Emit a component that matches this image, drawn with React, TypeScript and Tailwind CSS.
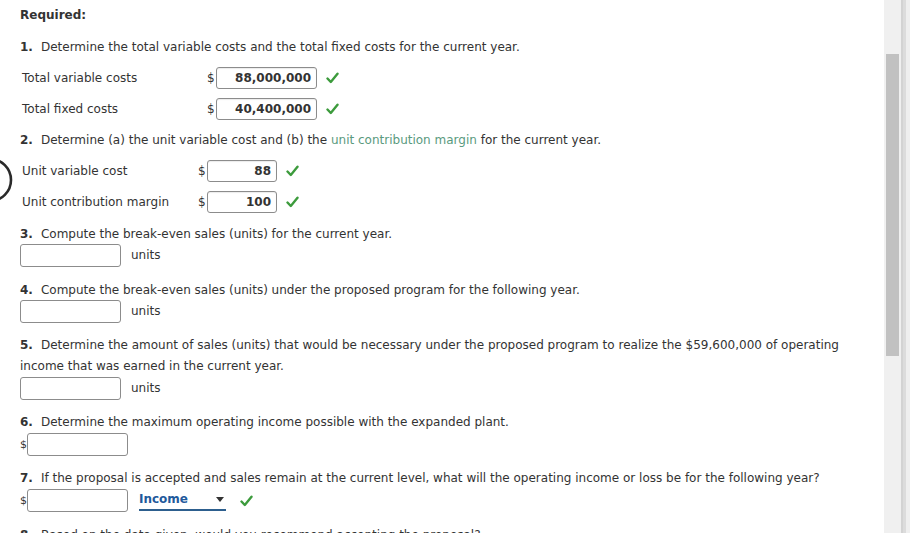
import React from "react";

const Check = () => (
  <svg width="13" height="12" viewBox="0 0 13 12" className="inline-block">
    <path d="M1.5 6.5 L4.8 10 L11.5 1.8" fill="none" stroke="#3c9b3c" strokeWidth="2.4" strokeLinecap="round" strokeLinejoin="round" />
  </svg>
);

const Num = ({ n }: { n: string }) => (
  <>
    <b className="font-bold">{n}</b>
    <span className="inline-block w-[8px]" />
  </>
);

const Box = ({ w, value }: { w: string; value?: string }) => (
  <div
    className={`${w} h-[22px] border border-[#8c8c8c] rounded-[3px] bg-white flex items-center justify-end pr-[5px] font-bold text-[12px] text-[#333] shadow-[inset_0_1px_1px_rgba(0,0,0,0.08)]`}
  >
    {value}
  </div>
);

export default function App() {
  return (
    <div
      className="w-[910px] h-[533px] overflow-hidden flex bg-white text-[#333] text-[12px] leading-[21px]"
      style={{ fontFamily: '"DejaVu Sans", Verdana, sans-serif' }}
    >
      <div className="relative flex-1 pl-[20px]">
        <svg className="absolute left-0 top-[156px]" width="16" height="48" viewBox="0 0 16 48">
          <circle cx="-10" cy="24" r="21" fill="none" stroke="#2a2a2a" strokeWidth="2.6" />
        </svg>

        <div className="mt-[5px] h-[20px] flex items-center font-bold text-[#333]">Required:</div>

        <div className="mt-[12px] h-[20px] flex items-center">
          <span>
            <Num n="1." />
            Determine the total variable costs and the total fixed costs for the current year.
          </span>
        </div>

        <div className="mt-[10px] h-[22px] flex items-center pl-[2px]">
          <div className="w-[185px]">Total variable costs</div>
          <span className="w-[9px]">$</span>
          <Box w="w-[101px]" value="88,000,000" />
          <span className="ml-[9px] flex items-center"><Check /></span>
        </div>
        <div className="mt-[9px] h-[22px] flex items-center pl-[2px]">
          <div className="w-[185px]">Total fixed costs</div>
          <span className="w-[9px]">$</span>
          <Box w="w-[101px]" value="40,400,000" />
          <span className="ml-[9px] flex items-center"><Check /></span>
        </div>

        <div className="mt-[10px] h-[20px] flex items-center">
          <span>
            <Num n="2." />
            Determine (a) the unit variable cost and (b) the{" "}
            <span className="text-[#5a9a7e]">unit contribution margin</span> for the current year.
          </span>
        </div>

        <div className="mt-[10px] h-[22px] flex items-center pl-[2px]">
          <div className="w-[176px]">Unit variable cost</div>
          <span className="w-[9px]">$</span>
          <Box w="w-[70px]" value="88" />
          <span className="ml-[9px] flex items-center"><Check /></span>
        </div>
        <div className="mt-[9px] h-[22px] flex items-center pl-[2px]">
          <div className="w-[176px]">Unit contribution margin</div>
          <span className="w-[9px]">$</span>
          <Box w="w-[70px]" value="100" />
          <span className="ml-[9px] flex items-center"><Check /></span>
        </div>

        <div className="mt-[11px] h-[20px] flex items-center">
          <span>
            <Num n="3." />
            Compute the break-even sales (units) for the current year.
          </span>
        </div>
        <div className="h-[23px] flex items-center">
          <div className="w-[101px] h-[23px] border border-[#8c8c8c] rounded-[3px] bg-white" />
          <span className="ml-[10px]">units</span>
        </div>

        <div className="mt-[13px] h-[20px] flex items-center">
          <span>
            <Num n="4." />
            Compute the break-even sales (units) under the proposed program for the following year.
          </span>
        </div>
        <div className="h-[23px] flex items-center">
          <div className="w-[101px] h-[23px] border border-[#8c8c8c] rounded-[3px] bg-white" />
          <span className="ml-[10px]">units</span>
        </div>

        <div className="mt-[12px] w-[850px]">
          <Num n="5." />
          Determine the amount of sales (units) that would be necessary under the proposed program to realize the $59,600,000 of operating income that was earned in the current year.
        </div>
        <div className="h-[23px] flex items-center">
          <div className="w-[101px] h-[23px] border border-[#8c8c8c] rounded-[3px] bg-white" />
          <span className="ml-[10px]">units</span>
        </div>

        <div className="mt-[12px] h-[20px] flex items-center">
          <span>
            <Num n="6." />
            Determine the maximum operating income possible with the expanded plant.
          </span>
        </div>
        <div className="mt-[1px] h-[23px] flex items-center">
          <span className="w-[7px] text-[11px]">$</span>
          <div className="w-[101px] h-[23px] border border-[#8c8c8c] rounded-[3px] bg-white" />
        </div>

        <div className="mt-[12px] h-[20px] flex items-center">
          <span>
            <Num n="7." />
            If the proposal is accepted and sales remain at the current level, what will the operating income or loss be for the following year?
          </span>
        </div>
        <div className="mt-[1px] h-[23px] flex items-center">
          <span className="w-[7px] text-[11px]">$</span>
          <div className="w-[101px] h-[23px] border border-[#8c8c8c] rounded-[3px] bg-white" />
          <div className="ml-[11px] w-[87px] h-[20px] flex items-center justify-between border-b-2 border-[#2d5f8e] text-[#1f5a9c] font-bold text-[12px] pr-[2px]">
            <span>Income</span>
            <svg width="8" height="5" viewBox="0 0 8 5"><path d="M0 0 L8 0 L4 5 Z" fill="#333" /></svg>
          </div>
          <span className="ml-[14px] flex items-center"><Check /></span>
        </div>

        <div className="mt-[13px] h-[20px] flex items-center">
          <span>
            <Num n="8." />
            Based on the data given, would you recommend accepting the proposal?
          </span>
        </div>
      </div>

      <div className="w-[17px] h-full bg-[#f0f0f0] flex justify-center pt-[54px]">
        <div className="w-[13px] h-[302px] bg-[#c1c1c1]" />
      </div>
      <div className="w-[2px] h-full bg-[#d3d3d3]" />
      <div className="w-[3px] h-full bg-[#dcdcdc]" />
      <div className="w-[4px] h-full bg-[#efefef]" />
    </div>
  );
}
